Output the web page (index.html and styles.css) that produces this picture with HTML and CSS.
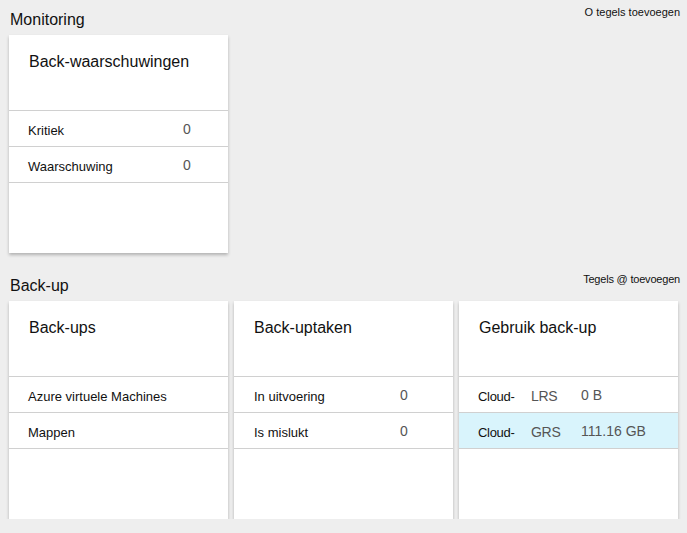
FILE: index.html
```html
<!DOCTYPE html>
<html>
<head>
<meta charset="utf-8">
<link rel="stylesheet" href="styles.css">
</head>
<body>
<section class="section">
  <div class="section-head">
    <h2 class="section-title">Monitoring</h2>
    <a class="add-link">O tegels toevoegen</a>
  </div>
  <div class="tiles">
    <div class="tile tile-alerts">
      <div class="tile-title">Back-waarschuwingen</div>
      <div class="rows">
        <div class="row"><span class="label">Kritiek</span><span class="value">0</span></div>
        <div class="row"><span class="label">Waarschuwing</span><span class="value">0</span></div>
      </div>
    </div>
  </div>
</section>
<section class="section section-second">
  <div class="section-head">
    <h2 class="section-title">Back-up</h2>
    <a class="add-link">Tegels @ toevoegen</a>
  </div>
  <div class="tiles">
    <div class="tile">
      <div class="tile-title">Back-ups</div>
      <div class="rows">
        <div class="row"><span class="label">Azure virtuele Machines</span></div>
        <div class="row"><span class="label">Mappen</span></div>
      </div>
    </div>
    <div class="tile tile-jobs">
      <div class="tile-title">Back-uptaken</div>
      <div class="rows">
        <div class="row"><span class="label">In uitvoering</span><span class="value">0</span></div>
        <div class="row"><span class="label">Is mislukt</span><span class="value">0</span></div>
      </div>
    </div>
    <div class="tile tile-usage">
      <div class="tile-title">Gebruik back-up</div>
      <div class="rows">
        <div class="row"><span class="label">Cloud-</span><span class="kind">LRS</span><span class="value">0 B</span></div>
        <div class="row row-selected"><span class="label">Cloud-</span><span class="kind">GRS</span><span class="value">111.16 GB</span></div>
      </div>
    </div>
  </div>
</section>
</body>
</html>
```

FILE: styles.css
```css
html, body {
  margin: 0;
  padding: 0;
  background: #eeeeee;
  font-family: "Liberation Sans", Arial, sans-serif;
  color: #1a1a1a;
}

body {
  padding: 0 7px 0 9px;
}

.section-second {
  margin-top: 13px;
}

.section-head {
  display: flex;
  justify-content: space-between;
  align-items: flex-start;
  height: 35px;
}

.section-title {
  margin: 0;
  padding: 11px 0 0 1px;
  font-size: 16px;
  line-height: 18px;
  font-weight: normal;
  color: #111;
}

.add-link {
  padding-top: 6px;
  font-size: 11px;
  line-height: 13px;
  color: #111;
}

.section-second .add-link {
  padding-top: 7px;
  letter-spacing: -0.2px;
}

.tiles {
  display: flex;
  gap: 6px;
}

.tile {
  width: 219px;
  height: 218px;
  background: #fff;
  box-shadow: 0 2px 3px rgba(0, 0, 0, 0.25);
}

.tile-title {
  box-sizing: border-box;
  height: 75px;
  padding: 18px 20px 0;
  font-size: 16px;
  line-height: 18px;
  color: #111;
}

.rows {
  border-top: 1px solid #d0d0d0;
}

.row {
  display: grid;
  grid-template-columns: 155px 1fr;
  align-items: baseline;
  height: 36px;
  box-sizing: border-box;
  padding: 12px 0 8px 19px;
  border-bottom: 1px solid #d0d0d0;
  font-size: 13px;
  line-height: 15px;
  color: #111;
}

.tile-jobs .row {
  padding-left: 20px;
  grid-template-columns: 146px 1fr;
}

.tile-usage .row {
  grid-template-columns: 53px 50px 1fr;
}

.tile-usage .label {
  letter-spacing: -0.3px;
}

.row-selected {
  background: #d9f4fc;
}

.value {
  font-size: 14px;
  color: #555;
  position: relative;
  top: -1px;
}

.kind {
  font-size: 14px;
  color: #555;
  letter-spacing: -0.3px;
}
```
